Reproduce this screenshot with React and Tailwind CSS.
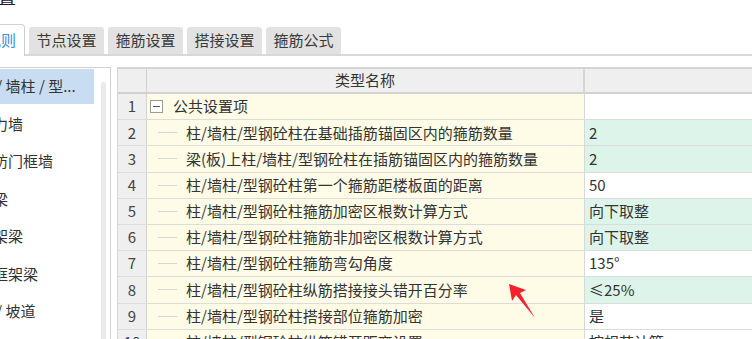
import React from "react"

const tabs = ["节点设置", "箍筋设置", "搭接设置", "箍筋公式"]

const sideItems = ["柱 / 墙柱 / 型...", "剪力墙", "人防门框墙", "连梁", "框架梁", "非框架梁", "板 / 坡道"]

// rows of the settings grid
const rows = [
    { name: "公共设置项", value: "", green: false, group: true },
    { name: "柱/墙柱/型钢砼柱在基础插筋锚固区内的箍筋数量", value: "2", green: true },
    { name: "梁(板)上柱/墙柱/型钢砼柱在插筋锚固区内的箍筋数量", value: "2", green: true },
    { name: "柱/墙柱/型钢砼柱第一个箍筋距楼板面的距离", value: "50", green: false },
    { name: "柱/墙柱/型钢砼柱箍筋加密区根数计算方式", value: "向下取整", green: true },
    { name: "柱/墙柱/型钢砼柱箍筋非加密区根数计算方式", value: "向下取整", green: true },
    { name: "柱/墙柱/型钢砼柱箍筋弯勾角度", value: "135°", green: false },
    { name: "柱/墙柱/型钢砼柱纵筋搭接接头错开百分率", value: "≤25%", green: true },
    { name: "柱/墙柱/型钢砼柱搭接部位箍筋加密", value: "是", green: false },
    { name: "柱/墙柱/型钢砼柱纵筋错开距离设置", value: "按规范计算", green: false }
]

const App = () => {
    return (
        <div className="relative w-[752px] h-[339px] overflow-hidden bg-white text-[#333] font-['Noto_Sans_CJK_SC','Noto_Sans',sans-serif]">
            {/* Title, cut by the window top */}
            <div className="h-[24px] overflow-hidden">
                <div className="mt-[-13px] ml-[-2px] text-[18px] leading-none text-[#222]">置</div>
            </div>

            {/* Tabs */}
            <div className="flex items-end h-[32px] border-b-2 border-[#d8d8d8]">
                <div className="relative z-10 mb-[-2px] ml-[-56px] mr-[4px] flex h-[32px] w-[81px] items-center justify-end rounded-tr-[4px] border border-b-0 border-[#d0d0d0] bg-white pr-[8px] text-[15px] text-[#3a8ae0]">
                    计算规则
                </div>
                <div className="flex gap-[4px]">
                    {tabs.map((t) => (
                        <div
                            key={t}
                            className="flex h-[27px] w-[75px] items-center justify-center rounded-t-[3px] bg-[#e2e2e2] text-[15px] text-[#3a3a3a]"
                        >
                            {t}
                        </div>
                    ))}
                </div>
            </div>

            {/* Body */}
            <div className="flex gap-[6px] pt-[11px]">
                {/* Left list */}
                <div className="relative flex h-[300px] w-[111px] shrink-0 border-t border-r border-[#d0d0d0]">
                    <div className="flex-1 pt-[1px]">
                        {sideItems.map((item, i) => (
                            <div
                                key={item}
                                className={`mb-[2.5px] flex h-[35px] w-[94px] items-center overflow-hidden whitespace-nowrap text-[15px] ${i === 0 ? "bg-[#c8ddf1]" : ""}`}
                            >
                                <span className="ml-[-22px]">{item}</span>
                            </div>
                        ))}
                    </div>
                    <div className="mt-[14px] mr-[4px] w-[5px] rounded-[2px] bg-[#e9e9e9]" />
                </div>

                {/* Grid */}
                <div className="flex-1 border-t-2 border-l border-[#d4d4d4]">
                    <div className="flex h-[25px] border-b-2 border-[#d2d2d2] bg-[#efefef] text-[15px]">
                        <div className="w-[29px] shrink-0 border-r border-[#d2d2d2]" />
                        <div className="flex w-[438px] shrink-0 items-center justify-center border-r-2 border-[#d6d6d6]">类型名称</div>
                        <div className="flex-1" />
                    </div>
                    {rows.map((r, i) => (
                        <div key={i} className="flex h-[26.2px] border-b border-[#dcdcdc] text-[15px]">
                            <div className="flex w-[29px] shrink-0 items-center justify-center border-r border-[#d2d2d2] bg-[#efefef] text-[#444]">
                                {i + 1}
                            </div>
                            <div className="flex w-[438px] shrink-0 items-center border-r border-[#d8d8d8] bg-[#fefbe6] whitespace-nowrap">
                                {r.group ? (
                                    <>
                                        <span className="ml-[3px] flex h-[13px] w-[13px] items-center justify-center border border-[#9a9a9a] bg-white">
                                            <span className="h-[1px] w-[7px] bg-[#555]" />
                                        </span>
                                        <span className="ml-[10px]">{r.name}</span>
                                    </>
                                ) : (
                                    <>
                                        <span className="ml-[11px] h-[1px] w-[19px] bg-[#d6d6d6]" />
                                        <span className="ml-[9px]">{r.name}</span>
                                    </>
                                )}
                            </div>
                            <div className={`flex flex-1 items-center pl-[4px] ${r.green ? "bg-[#ddf4ea]" : "bg-white"}`}>
                                {r.value}
                            </div>
                        </div>
                    ))}
                </div>
            </div>

            {/* Red annotation arrow */}
            <svg className="absolute left-0 top-0 pointer-events-none" width="752" height="339">
                <polygon points="509,284 526,290 520,293 535,318 516,295 512,301" fill="#f5222d" />
            </svg>
        </div>
    )
}

export default App
